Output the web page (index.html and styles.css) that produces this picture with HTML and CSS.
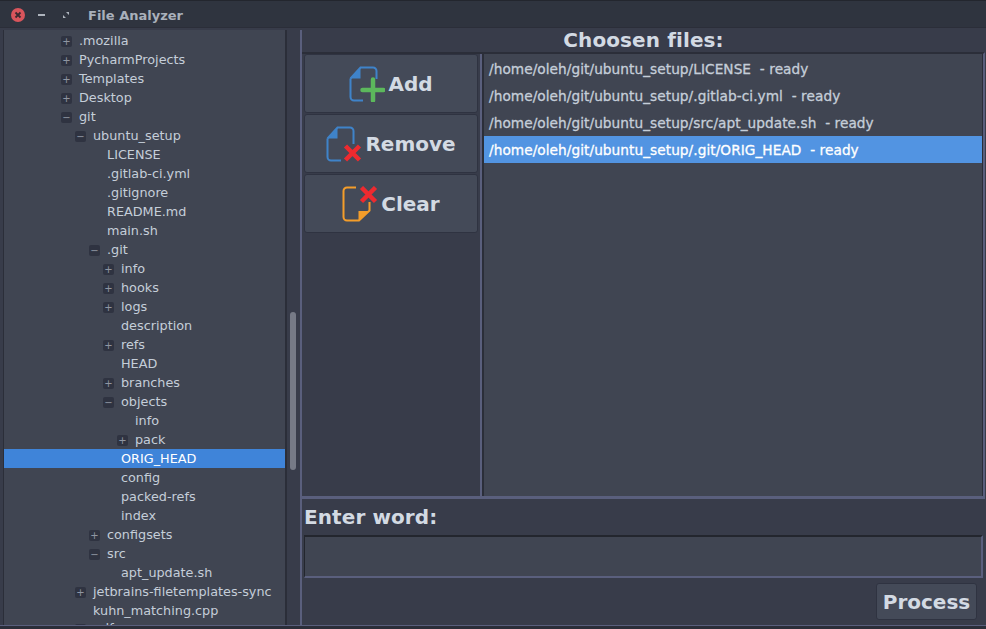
FILE: index.html
```html
<!DOCTYPE html>
<html lang="en">
<head>
    <meta charset="UTF-8">
    <title>File Analyzer</title>
    <link rel="stylesheet" href="styles.css">
</head>
<body>
    <div class="window">
        <div class="titlebar">
            <span class="btn-close">
                <svg width="14" height="14" viewBox="0 0 14 14"><circle cx="7" cy="7" r="7" fill="#d9555c"/><path d="M4.500 4.500l5 5M9.500 4.500l-5 5" stroke="#3a2a30" stroke-width="1.800"/></svg>
            </span>
            <span class="btn-min"></span>
            <span class="btn-max">
                <svg width="8" height="8" viewBox="0 0 8 8"><path d="M4 1h3v3zM1 4l3 3H1z" fill="#aeb4bd"/></svg>
            </span>
            <span class="title">File Analyzer</span>
        </div>
        <div class="content">
            <div class="tree-pane">
                <div class="tree">
                    <div class="row d2"><span class="box">+</span>.mozilla</div>
                    <div class="row d2"><span class="box">+</span>PycharmProjects</div>
                    <div class="row d2"><span class="box">+</span>Templates</div>
                    <div class="row d2"><span class="box">+</span>Desktop</div>
                    <div class="row d2"><span class="box">&minus;</span>git</div>
                    <div class="row d3"><span class="box">&minus;</span>ubuntu_setup</div>
                    <div class="row d4">LICENSE</div>
                    <div class="row d4">.gitlab-ci.yml</div>
                    <div class="row d4">.gitignore</div>
                    <div class="row d4">README.md</div>
                    <div class="row d4">main.sh</div>
                    <div class="row d4"><span class="box">&minus;</span>.git</div>
                    <div class="row d5"><span class="box">+</span>info</div>
                    <div class="row d5"><span class="box">+</span>hooks</div>
                    <div class="row d5"><span class="box">+</span>logs</div>
                    <div class="row d5">description</div>
                    <div class="row d5"><span class="box">+</span>refs</div>
                    <div class="row d5">HEAD</div>
                    <div class="row d5"><span class="box">+</span>branches</div>
                    <div class="row d5"><span class="box">&minus;</span>objects</div>
                    <div class="row d6">info</div>
                    <div class="row d6"><span class="box">+</span>pack</div>
                    <div class="row d5 selected">ORIG_HEAD</div>
                    <div class="row d5">config</div>
                    <div class="row d5">packed-refs</div>
                    <div class="row d5">index</div>
                    <div class="row d4"><span class="box">+</span>configsets</div>
                    <div class="row d4"><span class="box">&minus;</span>src</div>
                    <div class="row d5">apt_update.sh</div>
                    <div class="row d3"><span class="box">+</span>jetbrains-filetemplates-sync</div>
                    <div class="row d3">kuhn_matching.cpp</div>
                    <div class="row d3 last"><span class="box">+</span>pdf</div>
                </div>
                <div class="scrollbar"><div class="thumb"></div></div>
            </div>
            <div class="right">
                <h2 class="heading">Choosen files:</h2>
                <div class="files-area">
                    <div class="actions">
                        <button class="action">
                            <svg width="36" height="36" viewBox="0 0 36 36"><path d="M1.500 12.500L11.500 1.500H24a3.500 3.500 0 0 1 3.500 3.500V13M14 34.500H5A3.500 3.500 0 0 1 1.500 31V12.500" fill="none" stroke="#3f83c9" stroke-width="2"/><path d="M1.500 12.500L11.500 1.500V12.500z" fill="#3f83c9"/><path d="M13.500 24h21M24 13.500v21" stroke="#5cb85c" stroke-width="4.500" stroke-linecap="round"/></svg>
                            <span>Add</span>
                        </button>
                        <button class="action">
                            <svg width="36" height="36" viewBox="0 0 36 36"><path d="M1.500 12.500L11.500 1.500H24a3.500 3.500 0 0 1 3.500 3.500V18M15 34.500H5A3.500 3.500 0 0 1 1.500 31V12.500" fill="none" stroke="#3f83c9" stroke-width="2"/><path d="M1.500 12.500L11.500 1.500V12.500z" fill="#3f83c9"/><path d="M19.500 20l14 14M33.500 20l-14 14" stroke="#ee2a2f" stroke-width="4.500"/></svg>
                            <span>Remove</span>
                        </button>
                        <button class="action">
                            <svg width="36" height="36" viewBox="0 0 36 36"><path d="M14 1.500H5A3.500 3.500 0 0 0 1.500 5V31A3.500 3.500 0 0 0 5 34.500H17L27.500 24.500V16" fill="none" stroke="#f49d2a" stroke-width="2"/><path d="M16.500 34.500V25H27.500z" fill="#f49d2a"/><path d="M19.500 1.500l14 14M33.500 1.500l-14 14" stroke="#ee2a2f" stroke-width="4.500"/></svg>
                            <span>Clear</span>
                        </button>
                    </div>
                    <div class="files">
                        <div class="file">/home/oleh/git/ubuntu_setup/LICENSE&nbsp; - ready</div>
                        <div class="file">/home/oleh/git/ubuntu_setup/.gitlab-ci.yml&nbsp; - ready</div>
                        <div class="file">/home/oleh/git/ubuntu_setup/src/apt_update.sh&nbsp; - ready</div>
                        <div class="file selected">/home/oleh/git/ubuntu_setup/.git/ORIG_HEAD&nbsp; - ready</div>
                    </div>
                </div>
                <div class="word-area">
                    <h2 class="heading left">Enter word:</h2>
                    <input class="word" type="text">
                    <div class="process-row"><button class="process">Process</button></div>
                </div>
            </div>
        </div>
    </div>
</body>
</html>
```

FILE: styles.css
```css
html, body {
    margin: 0;
    padding: 0;
    height: 100%;
    overflow: hidden;
}
body {
    font-family: "DejaVu Sans", sans-serif;
    background-color: #2b2e39;
    color: #d3dae3;
}
.window {
    display: flex;
    flex-direction: column;
    height: 629px;
}
.titlebar {
    display: flex;
    align-items: center;
    height: 28px;
    flex: none;
    box-sizing: border-box;
    padding: 2px 0 0 11px;
    background-color: #2f343f;
    border-top: 1px solid #23262e;
    border-bottom: 1px solid #2b2e39;
}
.btn-close {
    display: flex;
    width: 14px;
    height: 14px;
}
.btn-min {
    width: 7px;
    height: 2px;
    margin-left: 13px;
    background-color: #aeb4bd;
}
.btn-max {
    display: flex;
    margin-left: 17px;
}
.title {
    margin-left: 18px;
    font-size: 13px;
    font-weight: bold;
    color: #a9b0bb;
}
.content {
    display: flex;
    flex: none;
    height: 598px;
    box-sizing: border-box;
    padding: 2px 1px 0 3px;
    background-color: #383c4a;
    border-bottom: 1px solid #5a5f7d;
}
.tree-pane {
    display: flex;
    width: 299px;
    flex: none;
    border-right: 2px solid #5a5f7d;
    box-sizing: border-box;
}
.tree {
    flex: 1;
    overflow: hidden;
    background-color: #404552;
    border-left: 1px solid #2b2e39;
    border-right: 2px solid #2b2e39;
    padding-top: 1px;
}
.row {
    position: relative;
    height: 19px;
    line-height: 19px;
    font-size: 12.800px;
    white-space: nowrap;
    color: #c5ced9;
}
.row.last {
    line-height: 15px;
}
.row.last .box {
    top: 4px;
}
.d2 { padding-left: 75px; }
.d3 { padding-left: 89px; }
.d4 { padding-left: 103px; }
.d5 { padding-left: 117px; }
.d6 { padding-left: 131px; }
.row.selected {
    background-color: #3f84d9;
    color: #ffffff;
}
.box {
    position: absolute;
    top: 5px;
    width: 11px;
    height: 11px;
    margin-left: -18px;
    border-radius: 2px;
    background-color: #2f3341;
    color: #8f96a3;
    font-size: 10px;
    line-height: 11px;
    text-align: center;
}
.scrollbar {
    width: 13px;
    flex: none;
    position: relative;
}
.thumb {
    position: absolute;
    top: 282px;
    left: 3px;
    width: 6px;
    height: 158px;
    border-radius: 3px;
    background-color: #767a86;
}
.right {
    flex: 1;
    display: flex;
    flex-direction: column;
    min-width: 0;
}
.heading {
    margin: 0;
    height: 22px;
    line-height: 20px;
    font-size: 20px;
    letter-spacing: 0.100px;
    font-weight: bold;
    text-align: center;
    color: #d3dae3;
    flex: none;
}
.heading.left {
    text-align: left;
    line-height: 24px;
    padding-left: 2px;
}
.files-area {
    display: flex;
    height: 446px;
    flex: none;
    box-sizing: border-box;
    border-top: 2px solid #2b2e39;
    border-right: 2px solid #5a5f7d;
    border-bottom: 2px solid #5a5f7d;
}
.actions {
    width: 180px;
    flex: none;
    box-sizing: border-box;
    display: flex;
    flex-direction: column;
    gap: 1px;
    padding: 0 2px;
    border-right: 2px solid #5a5f7d;
}
.action {
    display: flex;
    align-items: center;
    justify-content: center;
    gap: 3px;
    height: 59px;
    padding: 0;
    border: 1px solid #2f3341;
    border-radius: 3px;
    background-color: #444a58;
    color: #d3dae3;
    font-family: inherit;
    font-size: 20px;
    font-weight: bold;
}
.files {
    flex: 1;
    background-color: #404552;
    border-left: 2px solid #2b2e39;
    border-right: 1px solid #2b2e39;
    padding-top: 1px;
}
.file {
    height: 27px;
    line-height: 28px;
    padding-left: 5px;
    font-size: 13.700px;
    letter-spacing: 0.050px;
    -webkit-text-stroke: 0.300px currentColor;
    color: #c5ced9;
}
.file.selected {
    background-color: #5294e2;
    color: #ffffff;
}
.word-area {
    flex: 1;
    display: flex;
    flex-direction: column;
    padding-top: 6px;
    border-top: 1px solid #5a5f7d;
}
.word {
    height: 43px;
    flex: none;
    box-sizing: border-box;
    margin: 8px 2px 0;
    background-color: #404552;
    border: 0;
    border-top: 2px solid #23262e;
    border-left: 1px solid #23262e;
    border-right: 2px solid #5a5f7d;
    border-bottom: 2px solid #5a5f7d;
}
.process-row {
    display: flex;
    justify-content: flex-end;
    padding: 5px 8px 0 0;
}
.process {
    width: 101px;
    height: 37px;
    padding: 0;
    border: 1px solid #2f3341;
    border-radius: 3px;
    background-color: #444a58;
    color: #d3dae3;
    font-family: inherit;
    font-size: 20px;
    font-weight: bold;
}
```
